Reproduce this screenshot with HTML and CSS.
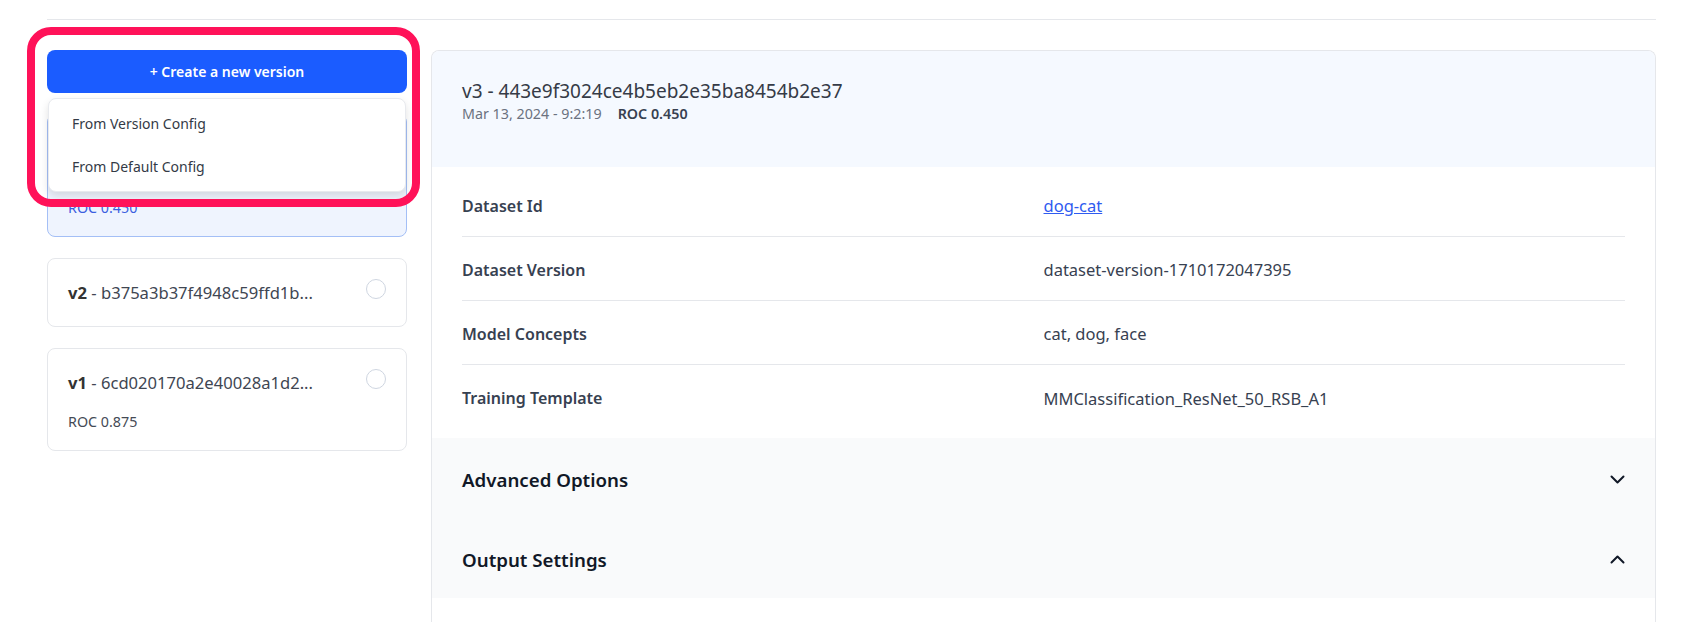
FILE: index.html
```html
<!DOCTYPE html>
<html lang="en">
<head>
<meta charset="utf-8">
<title>Model versions</title>
<link rel="stylesheet" href="styles.css">
</head>
<body>
<div class="page">
  <div class="main">
    <aside class="left">
      <div class="annotation"></div>
      <div class="create-wrap">
        <button class="create-btn">+ Create a new version</button>
        <div class="dropdown">
          <div class="dd-item">From Version Config</div>
          <div class="dd-item">From Default Config</div>
        </div>
      </div>
      <div class="card selected">
        <div class="card-row">
          <div class="card-title"><b>v3</b> - 443e9f3024ce4b5eb2e3...</div>
          <span class="radio checked"></span>
        </div>
        <div class="card-date">Mar 13, 2024 - 9:2:19</div>
        <div class="card-roc">ROC 0.450</div>
      </div>
      <div class="card">
        <div class="card-row">
          <div class="card-title"><b>v2</b> - b375a3b37f4948c59ffd1b...</div>
          <span class="radio"></span>
        </div>
      </div>
      <div class="card last">
        <div class="card-row">
          <div class="card-title"><b>v1</b> - 6cd020170a2e40028a1d2...</div>
          <span class="radio"></span>
        </div>
        <div class="card-roc">ROC 0.875</div>
      </div>
    </aside>
    <section class="panel">
      <header class="panel-head">
        <div class="panel-title">v3 - 443e9f3024ce4b5eb2e35ba8454b2e37</div>
        <div class="panel-sub"><span class="date">Mar 13, 2024 - 9:2:19</span><span class="roc">ROC 0.450</span></div>
      </header>
      <div class="rows">
        <div class="row"><div class="label">Dataset Id</div><div class="value"><a href="#" class="link">dog-cat</a></div></div>
        <div class="row"><div class="label">Dataset Version</div><div class="value">dataset-version-1710172047395</div></div>
        <div class="row"><div class="label">Model Concepts</div><div class="value">cat, dog, face</div></div>
        <div class="row"><div class="label">Training Template</div><div class="value">MMClassification_ResNet_50_RSB_A1</div></div>
      </div>
      <div class="accordion">
        <div class="acc-item">
          <span class="acc-title">Advanced Options</span>
          <svg class="chev" width="15" height="9" viewBox="0 0 15 9"><polyline points="1.5,1.5 7.5,7.5 13.5,1.5" fill="none" stroke="#111827" stroke-width="2" stroke-linecap="round" stroke-linejoin="round"/></svg>
        </div>
        <div class="acc-item">
          <span class="acc-title">Output Settings</span>
          <svg class="chev" width="15" height="9" viewBox="0 0 15 9"><polyline points="1.5,7.5 7.5,1.5 13.5,7.5" fill="none" stroke="#111827" stroke-width="2" stroke-linecap="round" stroke-linejoin="round"/></svg>
        </div>
      </div>
    </section>
  </div>
</div>
</body>
</html>
```
FILE: styles.css
```css
* { box-sizing: border-box; }
html, body { margin: 0; height: 100%; overflow: hidden; background: #fff; }
body { font-family: "Noto Sans", "Open Sans", sans-serif; color: #374151; }

.page { padding: 19px 52px 0 47px; height: 100%; }
.main {
  border-top: 1px solid #e5e7eb;
  padding-top: 30px;
  display: flex;
  gap: 24px;
  height: 100%;
}

/* left column */
.left { width: 360px; flex: none; position: relative; display: flex; flex-direction: column; gap: 21px; }
.annotation {
  position: absolute;
  left: -20px; top: -23px; width: 393px; height: 180px;
  border: 8px solid #ff1259;
  border-radius: 24px;
  z-index: 5;
  pointer-events: none;
}
.create-wrap { position: relative; }
.create-btn {
  display: block; width: 100%; height: 43px;
  border: none; border-radius: 8px;
  background: #1b5cff; color: #fff;
  font-family: inherit; font-size: 14px; font-weight: 600;
}
.dropdown {
  position: absolute; left: 1px; right: 1px; top: 48px;
  background: #fff;
  border: 1px solid #e8eaee;
  border-radius: 8px;
  box-shadow: 0 4px 8px rgba(0, 0, 0, 0.12);
  padding: 3px 0;
  z-index: 4;
}
.dd-item { height: 43px; line-height: 44px; padding-left: 23px; font-size: 14px; color: #333a46; }

.card {
  border: 1px solid #e5e7eb;
  border-radius: 8px;
  padding: 20px 19px 20px 20px;
  background: #fff;
}
.card.selected { background: #eff4fe; border-color: #a4bff6; padding-bottom: 18px; }
.card.last { padding-bottom: 18px; }
.card-row { display: flex; justify-content: space-between; align-items: flex-start; }
.card-title { font-size: 16.6px; line-height: 27px; color: #404652; }
.card-title b { font-weight: 700; color: #333; }
.radio { width: 20px; height: 20px; border-radius: 50%; border: 1.5px solid #cfd6e1; background: #fff; flex: none; margin-right: 1px; }
.radio.checked { border: 6px solid #1b5cff; }
.card-date { margin-top: 8px; font-size: 14px; line-height: 20px; color: #6b7280; }
.card-roc { margin-top: 16px; font-size: 14.3px; line-height: 20px; color: #444a55; }
.card.selected .card-roc { margin-top: 8px; color: #3b5ee0; }

/* right panel */
.panel {
  flex: 1;
  border: 1px solid #e5e7eb;
  border-bottom: none;
  border-radius: 8px 8px 0 0;
  overflow: hidden;
  background: #fff;
}
.panel-head {
  height: 116px;
  background: #f5f9ff;
  padding: 28px 30px 0;
}
.panel-title { font-size: 19px; line-height: 25px; color: #353b47; }
.panel-sub { font-size: 14.3px; line-height: 20px; color: #6b7280; display: flex; gap: 16px; }
.panel-sub .roc { font-weight: 600; color: #374151; }

.rows { padding: 6px 30px 9px; }
.row {
  height: 64px;
  display: grid;
  grid-template-columns: 1fr 1fr;
  align-items: center;
  border-bottom: 1px solid #e5e7eb;
  font-size: 16px;
  padding-top: 2px;
}
.row:last-child { border-bottom: none; }
.label { font-weight: 600; color: #374151; }
.value { color: #374151; font-size: 16.5px; }
.link { color: #2f5bf0; text-decoration: underline; }

.accordion { background: #f9fafb; padding-top: 1px; }
.acc-item {
  height: 80px;
  padding: 1px 30px 0;
  display: flex;
  align-items: center;
  justify-content: space-between;
}
.acc-item:last-child { height: 79px; }
.acc-title { font-size: 18.7px; font-weight: 600; color: #111827; }
.chev { display: block; }
```
